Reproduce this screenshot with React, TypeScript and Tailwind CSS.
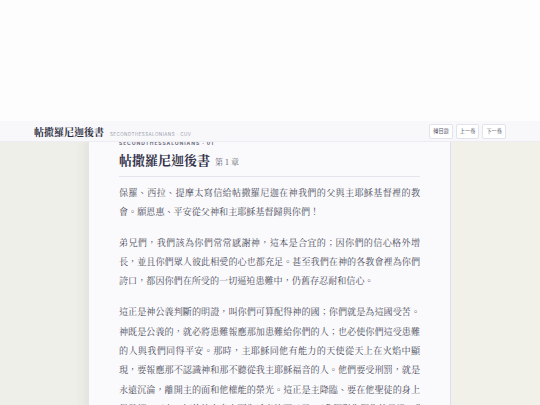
import React from 'react'

const serif = '"Noto Serif CJK TC", "Liberation Serif", "Noto Sans CJK TC", serif'

// each paragraph is split into the lines the reading view shows
const paragraphs = [
  [
    '保羅、西拉、提摩太寫信給帖撒羅尼迦在神我們的父與主耶穌基督裡的教',
    '會。願恩惠、平安從父神和主耶穌基督歸與你們！',
  ],
  [
    '弟兄們，我們該為你們常常感謝神，這本是合宜的；因你們的信心格外增',
    '長，並且你們眾人彼此相愛的心也都充足。甚至我們在神的各教會裡為你們',
    '誇口，都因你們在所受的一切逼迫患難中，仍舊存忍耐和信心。',
  ],
  [
    '這正是神公義判斷的明證，叫你們可算配得神的國；你們就是為這國受苦。',
    '神既是公義的，就必將患難報應那加患難給你們的人；也必使你們這受患難',
    '的人與我們同得平安。那時，主耶穌同他有能力的天使從天上在火焰中顯',
    '現，要報應那不認識神和那不聽從我主耶穌福音的人。他們要受刑罰，就是',
    '永遠沉淪，離開主的面和他權能的榮光。這正是主降臨、要在他聖徒的身上',
    '得榮耀，又在一切信的人身上顯為希奇的那日子。（我們對你們作的見證，你',
    '們也信了。）',
  ],
]

export default function App() {
  return (
    <div className="h-[405px] w-[540px] overflow-hidden bg-[#efefe9]">
      <div className="h-[121px] bg-[#fdfdfd]" />

      <header className="relative z-10 h-[21px] border-b border-[#ececf2] bg-[#f8f8fb]">
        <div className="mx-[34px] flex h-full items-center justify-between">
          <div className="flex items-baseline gap-[6px]">
            <span className="text-[10px] font-bold text-[#2f2f40]" style={{ fontFamily: serif }}>
              帖撒羅尼迦後書
            </span>
            <span
              className="text-[4.5px] uppercase tracking-[0.45px] text-[#9b9bab]"
              style={{ fontFamily: 'Inter, "Liberation Sans", sans-serif' }}
            >
              SecondThessalonians · CUV
            </span>
          </div>
          <div className="flex gap-[3px]">
            {['轉目錄', '上一卷', '下一卷'].map((label) => (
              <button
                key={label}
                type="button"
                className="h-[15px] rounded-[2px] border border-[#e3e3ec] bg-white px-[3px] text-[5.2px] leading-none text-[#5a5a6c]"
                style={{ fontFamily: '"Noto Sans CJK TC", sans-serif' }}
              >
                {label}
              </button>
            ))}
          </div>
        </div>
      </header>

      <main className="flex">
        <div className="w-[89px] shrink-0" />
        <article className="-mt-[6px] w-[362px] shrink-0 border-r border-[#dedeea] bg-[#fafafc] px-[30px] pt-[3.5px] shadow-[0_0_14px_rgba(60,60,90,0.12)]">
          <div
            className="text-[5px] font-bold uppercase leading-[6px] tracking-[0.9px] text-[#6b6b7c]"
            style={{ fontFamily: 'Inter, "Liberation Sans", sans-serif' }}
          >
            SecondThessalonians · 01
          </div>

          <h1 className="mt-[5.5px] flex items-baseline gap-[5px] leading-[17px]" style={{ fontFamily: serif }}>
            <span className="text-[13px] font-bold text-[#33334a]">帖撒羅尼迦後書</span>
            <span className="text-[8px] text-[#5a5a6c]">第 1 章</span>
          </h1>

          <div className="mt-[6px] h-px bg-[#e4e4ee]" />

          <div className="mt-[5.5px] flex flex-col gap-[11.7px]">
            {paragraphs.map((lines, i) => (
              <p key={i} className="text-[9.1px] leading-[19.3px] text-[#4a4a5a]" style={{ fontFamily: serif }}>
                {lines.map((line, j) => (
                  <span
                    key={j}
                    className={
                      j < lines.length - 1
                        ? 'block whitespace-nowrap text-justify [text-align-last:justify]'
                        : 'block whitespace-nowrap'
                    }
                  >
                    {line}
                  </span>
                ))}
              </p>
            ))}
          </div>
        </article>
        <div className="flex-1 bg-[#f1f1ea]" />
      </main>
    </div>
  )
}
